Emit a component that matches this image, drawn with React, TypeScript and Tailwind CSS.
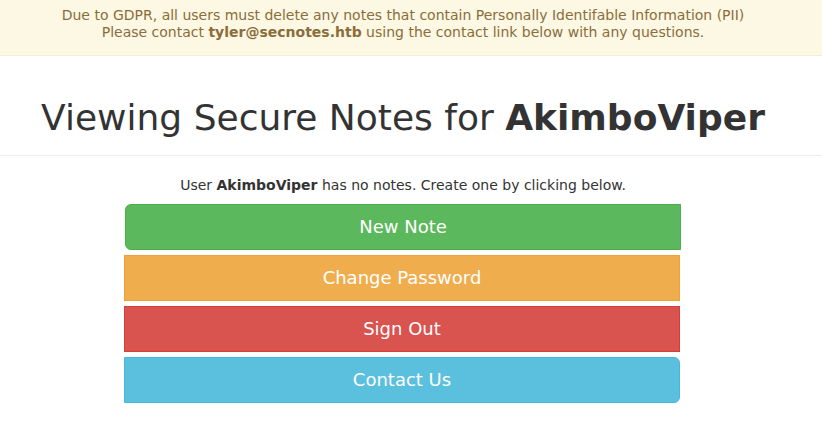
export default function App() {
  const btn =
    'w-[556px] h-[46px] pb-[2px] flex items-center justify-center text-[18px] text-white border';

  return (
    <div
      className="min-h-screen bg-white text-[#333]"
      style={{ fontFamily: '"DejaVu Sans", sans-serif' }}
    >
      {/* GDPR notice */}
      <div className="bg-[#fcf8e3] border-b border-[#faebcc] h-[56px] pr-[16px]">
        <div className="pt-[7px] text-center text-[14px] leading-[17px] text-[#8a6d3b]">
          Due to GDPR, all users must delete any notes that contain Personally Identifable Information (PII)
          <br />
          Please contact <strong>tyler@secnotes.htb</strong> using the contact link below with any questions.
        </div>
      </div>

      {/* Header */}
      <div className="pr-[16px] border-b border-[#eee] h-[100px] flex items-center justify-center">
        <h1 className="text-[36px] leading-[40px] pt-[24px]">
          Viewing Secure Notes for <strong>AkimboViper</strong>
        </h1>
      </div>

      <div className="pr-[16px] flex flex-col items-center">
        <p className="mt-[19px] text-[14px] leading-[20px]">
          User <strong>AkimboViper</strong> has no notes. Create one by clicking below.
        </p>

        <div className="mt-[9px] flex flex-col items-center gap-[5px]">
          <button className={`${btn} bg-[#5cb85c] border-[#4cae4c] rounded-l-[6px]`}>New Note</button>
          <button className={`${btn} bg-[#f0ad4e] border-[#eea236] mr-[2px]`}>Change Password</button>
          <button className={`${btn} bg-[#d9534f] border-[#d43f3a] mr-[2px]`}>Sign Out</button>
          <button className={`${btn} bg-[#5bc0de] border-[#46b8da] rounded-r-[6px] mr-[2px]`}>Contact Us</button>
        </div>
      </div>
    </div>
  );
}
